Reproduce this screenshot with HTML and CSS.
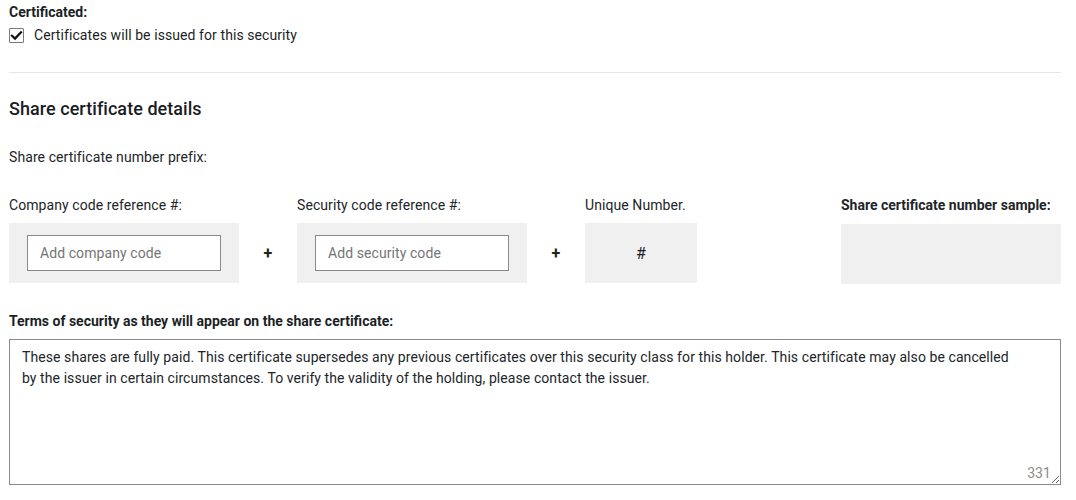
FILE: index.html
```html
<!DOCTYPE html>
<html>
<head>
<meta charset="utf-8">
<link rel="stylesheet" href="styles.css">
</head>
<body>
<div class="page">
  <div class="field-title">Certificated:</div>
  <label class="check-row">
    <span class="checkbox">
      <svg width="13" height="13" viewBox="0 0 13 13"><path d="M2 6.8 L5 9.6 L11 3.2" fill="none" stroke="#111" stroke-width="2.2" stroke-linecap="square"/></svg>
    </span>
    <span class="check-label">Certificates will be issued for this security</span>
  </label>
  <div class="divider"></div>
  <h2 class="section-title">Share certificate details</h2>
  <div class="prefix-label">Share certificate number prefix:</div>
  <div class="prefix-row">
    <div class="col col-code">
      <div class="col-label">Company code reference #:</div>
      <div class="gray-box input-box"><input class="code-input" type="text" placeholder="Add company code"></div>
    </div>
    <div class="plus">+</div>
    <div class="col col-code">
      <div class="col-label">Security code reference #:</div>
      <div class="gray-box input-box"><input class="code-input" type="text" placeholder="Add security code"></div>
    </div>
    <div class="plus">+</div>
    <div class="col col-unique">
      <div class="col-label">Unique Number.</div>
      <div class="gray-box hash-box">#</div>
    </div>
    <div class="col col-sample">
      <div class="col-label bold">Share certificate number sample:</div>
      <div class="gray-box sample-box"></div>
    </div>
  </div>
  <div class="field-title terms-title">Terms of security as they will appear on the share certificate:</div>
  <div class="terms-wrap">
    <textarea class="terms">These shares are fully paid. This certificate supersedes any previous certificates over this security class for this holder. This certificate may also be cancelled
by the issuer in certain circumstances. To verify the validity of the holding, please contact the issuer.</textarea>
    <span class="counter">331</span>
  </div>
</div>
</body>
</html>
```
FILE: styles.css
```css
* { box-sizing: border-box; }
html, body { margin: 0; padding: 0; background: #fff; }
body {
  font-family: Roboto, "Liberation Sans", Arial, sans-serif;
  font-size: 14px;
  letter-spacing: 0.08px;
  color: #212529;
}
.page {
  width: 1070px;
  padding: 2px 9px 0 9px;
}
.field-title {
  font-weight: 700;
  line-height: 20px;
  letter-spacing: 0;
  color: #1c1f26;
}
.check-row {
  display: flex;
  align-items: center;
  height: 20px;
  margin-top: 3px;
}
.checkbox {
  width: 15px;
  height: 15px;
  border: 1px solid #7a7a7a;
  border-radius: 1px;
  display: flex;
  align-items: center;
  justify-content: center;
  margin-right: 10px;
}
.check-label {
  line-height: 20px;
  color: #1c1f26;
}
.divider {
  height: 1px;
  background: #e6e6e6;
  margin-top: 27px;
  width: 1052px;
}
.section-title {
  margin: 24px 0 0 0;
  font-size: 18px;
  font-weight: 500;
  line-height: 24px;
  letter-spacing: 0.05px;
  color: #1a1d24;
}
.prefix-label {
  margin-top: 26px;
  line-height: 20px;
}
.prefix-row {
  display: flex;
  width: 1052px;
  margin-top: 28px;
}
.col { display: flex; flex-direction: column; }
.col-label {
  line-height: 20px;
  margin-bottom: 8px;
}
.col-label.bold { font-weight: 700; letter-spacing: 0; }
.col-code { width: 230px; }
.col-unique { width: 112px; }
.col-sample { width: 220px; margin-left: auto; }
.gray-box {
  background: #f0f0f0;
  height: 60px;
}
.input-box {
  display: flex;
  align-items: center;
  padding: 0 18px;
}
.code-input {
  width: 194px;
  height: 36px;
  border: 1px solid #8a8a8a;
  border-radius: 0;
  background: #fff;
  padding: 0 12px;
  font-family: Roboto, "Liberation Sans", Arial, sans-serif;
  font-size: 14px;
  letter-spacing: 0.08px;
  color: #212529;
  outline: none;
}
.code-input::placeholder { color: #757575; }
.plus {
  width: 58px;
  display: flex;
  align-items: center;
  justify-content: center;
  padding-top: 28px;
  font-size: 16px;
  font-weight: 700;
  color: #222;
}
.hash-box {
  display: flex;
  align-items: center;
  justify-content: center;
  font-size: 16px;
  color: #222;
}
.sample-box { margin-top: 1px; }
.terms-title { margin-top: 27px; }
.terms-wrap {
  position: relative;
  width: 1052px;
  margin-top: 8px;
}
.terms {
  display: block;
  width: 1052px;
  height: 146px;
  border: 1px solid #8a8a8a;
  border-radius: 0;
  padding: 7px 12px;
  font-family: Roboto, "Liberation Sans", Arial, sans-serif;
  font-size: 14px;
  line-height: 21px;
  letter-spacing: 0.08px;
  color: #212529;
  resize: vertical;
  outline: none;
  white-space: pre-wrap;
}
.counter {
  position: absolute;
  right: 10px;
  bottom: 4px;
  font-size: 14px;
  line-height: 16px;
  color: #8c8c8c;
}
```
